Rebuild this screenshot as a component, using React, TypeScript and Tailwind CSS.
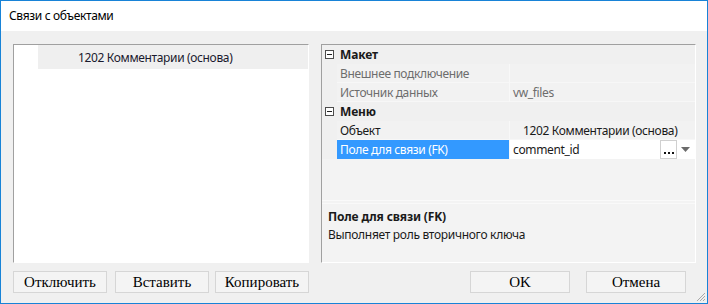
import React from 'react';

const ui = { fontFamily: '"Noto Sans", "Open Sans", sans-serif' };
const serif = { fontFamily: '"Liberation Serif", "Times New Roman", serif' };

const Minus = () => (
  <svg width="9" height="9" viewBox="0 0 9 9" className="block">
    <rect x="0.5" y="0.5" width="8" height="8" fill="#fff" stroke="#4d4d4d" />
    <line x1="2" y1="4.5" x2="7" y2="4.5" stroke="#222" />
  </svg>
);

const Category = ({ title }: { title: string }) => (
  <div className="flex h-[19px] items-center bg-[#f0f0f0]">
    <div className="w-[15px] flex justify-center">
      <Minus />
    </div>
    <span className="pl-[3px] pt-[1px] text-[12px] font-bold tracking-[-0.15px] text-[#1a1a1a]">{title}</span>
  </div>
);

const Row = ({
  name,
  value,
  disabled,
  indent,
}: {
  name: string;
  value: string;
  disabled?: boolean;
  indent?: boolean;
}) => (
  <div className="flex h-[19px] bg-[#f0f0f0]">
    <div className="w-[15px]" />
    <div
      className={`w-[172px] flex items-center pl-[3px] pt-[1px] border-b border-[#f7f7f7] bg-[#f2f2f2] text-[12px] tracking-[-0.35px] ${
        disabled ? 'text-[#6d6d6d]' : 'text-[#1a1a1a]'
      }`}
    >
      {name}
    </div>
    <div className="w-px bg-[#f8f8f8]" />
    <div
      className={`flex-1 flex items-center pt-[1px] border-b border-[#f7f7f7] bg-[#f2f2f2] text-[12px] tracking-[-0.35px] ${
        indent ? 'pl-[13px]' : 'pl-[3px]'
      } ${disabled ? 'text-[#6d6d6d]' : 'text-[#1a1a1a]'}`}
    >
      {value}
    </div>
  </div>
);

const Btn = ({ label, w }: { label: string; w: string }) => (
  <button
    className={`${w} h-[22px] bg-[#f4f4f4] border border-[#d6d6d6] text-[15px] text-black leading-none`}
    style={serif}
  >
    {label}
  </button>
);

export default function App() {
  return (
    <div
      className="w-[708px] h-[304px] border border-[#1883d7] bg-[#f0f0f0] flex flex-col relative"
      style={ui}
    >
      <div className="h-[30px] bg-white flex items-center pl-[8px] text-[12px] tracking-[-0.35px] text-black">
        Связи с объектами
      </div>

      <div className="flex pt-[13px] pl-[12px] pr-[11px] gap-[12px]">
        {/* left list */}
        <div className="w-[296px] h-[219px] border-t border-l border-[#a0a0a0] border-r border-r-white border-b border-b-white bg-white">
          <div className="ml-[24px] h-[24px] bg-[#efefef] flex items-center pl-[40px] pt-[1px] text-[12px] tracking-[-0.35px] text-[#1a1a2e]">
            1202 Комментарии (основа)
          </div>
        </div>

        {/* property grid */}
        <div className="w-[375px] h-[219px] border-t border-l border-[#a0a0a0] border-r border-r-white border-b border-b-white bg-[#f3f3f3] flex flex-col">
          <Category title="Макет" />
          <Row name="Внешнее подключение" value="" disabled />
          <Row name="Источник данных" value="vw_files" disabled />
          <Category title="Меню" />
          <Row name="Объект" value="1202 Комментарии (основа)" indent />
          <div className="flex h-[19px] bg-[#f0f0f0]">
            <div className="w-[15px]" />
            <div className="w-[172px] flex items-center pl-[3px] pt-[1px] bg-[#3399ff] text-white text-[12px] tracking-[-0.35px]">
              Поле для связи (FK)
            </div>
            <div className="w-px bg-[#f8f8f8]" />
            <div className="flex-1 flex items-center bg-white text-[12px] tracking-[-0.35px] text-[#1a1a1a]">
              <span className="flex-1 pl-[3px] pt-[1px]">comment_id</span>
              <div className="w-[17px] h-[19px] border border-[#d0d0d0] bg-white flex items-end justify-center pb-[3px]">
                <svg width="10" height="3" viewBox="0 0 10 3">
                  <rect x="0" y="0" width="2" height="2" fill="#111" />
                  <rect x="4" y="0" width="2" height="2" fill="#111" />
                  <rect x="8" y="0" width="2" height="2" fill="#111" />
                </svg>
              </div>
              <div className="w-[18px] flex justify-start pl-[4px]">
                <svg width="9" height="5" viewBox="0 0 9 5">
                  <path d="M0 0 H9 L4.5 5 Z" fill="#6b6b6b" />
                </svg>
              </div>
            </div>
          </div>
          <div className="h-[41px]" />
          <div className="h-px bg-[#fafafa]" />
          <div className="h-[2px]" />
          <div className="flex-1 border-t border-[#f9f9f9] pl-[6px] pt-[4px] text-[12px] text-[#1a1a1a]">
            <div className="font-bold tracking-[-0.15px] leading-[18px]">Поле для связи (FK)</div>
            <div className="tracking-[-0.3px] leading-[18px]">Выполняет роль вторичного ключа</div>
          </div>
        </div>
      </div>

      <div className="flex pt-[8px] pl-[12px] pr-[21px]">
        <div className="flex">
          <Btn label="Отключить" w="w-[94px]" />
          <div className="w-[8px]" />
          <Btn label="Вставить" w="w-[94px]" />
          <div className="w-[6px]" />
          <Btn label="Копировать" w="w-[94px]" />
        </div>
        <div className="flex gap-[16px] ml-auto">
          <Btn label="OK" w="w-[100px]" />
          <Btn label="Отмена" w="w-[100px]" />
        </div>
      </div>

      <svg
        className="absolute right-[1px] bottom-[1px]"
        width="11"
        height="11"
        viewBox="0 0 11 11"
      >
        <path d="M10 2 L2 10 M10 5 L5 10 M10 8 L8 10" stroke="#a8a8a8" strokeWidth="1" />
      </svg>
    </div>
  );
}
